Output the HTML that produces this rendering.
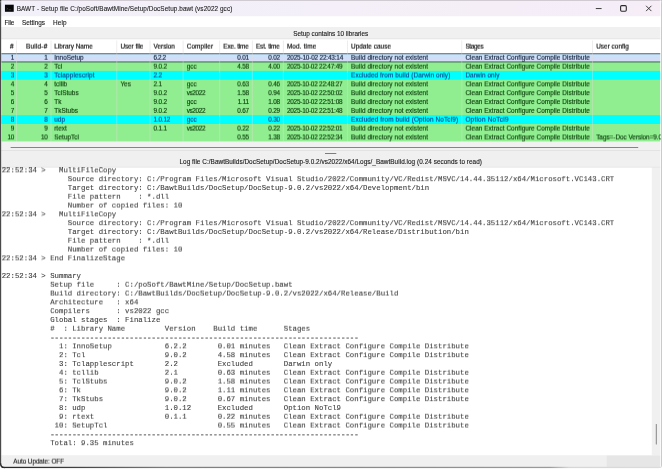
<!DOCTYPE html><html><head><meta charset="utf-8"><title>BAWT - Setup file</title><style>
html,body{margin:0;padding:0;background:#fff;}
body{width:662px;height:475px;overflow:hidden;position:relative;font-family:'Liberation Sans',sans-serif;}
.bg{position:absolute;left:0;top:0;}
.g{position:absolute;left:0;width:660.6px;overflow:hidden;height:10px;will-change:transform;white-space:pre;font-family:'Liberation Sans',sans-serif;font-size:6.4px;line-height:10px;color:#000;}
.g span{position:absolute;top:0;}
.m{position:absolute;left:1px;width:651px;overflow:hidden;will-change:transform;white-space:pre;font-family:'Liberation Mono',monospace;margin:0;-webkit-text-stroke:0.1px #3c3c3c;}

</style></head><body>
<svg class="bg" width="662" height="475" viewBox="0 0 662 475"><defs><clipPath id="win"><rect x="0" y="0" width="662.0" height="468.3" rx="3.5"/></clipPath><linearGradient id="tb" x1="0" x2="1" y1="0" y2="0"><stop offset="0" stop-color="#f2f0f8"/><stop offset="0.5" stop-color="#f4eff8"/><stop offset="1" stop-color="#f6edf7"/></linearGradient><linearGradient id="sel" x1="0" x2="0" y1="0" y2="1"><stop offset="0" stop-color="#c6e4fb"/><stop offset="0.45" stop-color="#cae2f9"/><stop offset="0.6" stop-color="#d3ddf6"/><stop offset="1" stop-color="#d5dcf6"/></linearGradient><linearGradient id="bb" x1="0" x2="1" y1="0" y2="0"><stop offset="0" stop-color="#242424"/><stop offset="0.1" stop-color="#3c3c3c"/><stop offset="0.25" stop-color="#7c7c7c"/><stop offset="0.65" stop-color="#8e8e8e"/><stop offset="0.83" stop-color="#9a9a9a"/><stop offset="0.86" stop-color="#d6d6d6"/><stop offset="1" stop-color="#dcdcdc"/></linearGradient></defs>
<rect x="657.00" y="0.00" width="5.00" height="5.00" fill="#c8c2ca" />
<g clip-path="url(#win)">
<rect x="0.00" y="0.00" width="662.00" height="468.30" fill="#f0f0f0" />
<rect x="0.00" y="0.00" width="662.00" height="16.20" fill="url(#tb)" />
<rect x="0.00" y="0.00" width="662.00" height="0.75" fill="#c4bec6" />
<rect x="0.00" y="16.20" width="662.00" height="10.80" fill="#ffffff" />
<rect x="1.00" y="38.60" width="660.00" height="0.80" fill="#dddddd" />
<rect x="1.00" y="39.30" width="660.00" height="111.30" fill="#ffffff" />
<rect x="16.10" y="40.50" width="0.80" height="12.40" fill="#e9e9e9" />
<rect x="50.60" y="40.50" width="0.80" height="12.40" fill="#e9e9e9" />
<rect x="116.40" y="40.50" width="0.80" height="12.40" fill="#e9e9e9" />
<rect x="149.60" y="40.50" width="0.80" height="12.40" fill="#e9e9e9" />
<rect x="182.70" y="40.50" width="0.80" height="12.40" fill="#e9e9e9" />
<rect x="219.30" y="40.50" width="0.80" height="12.40" fill="#e9e9e9" />
<rect x="251.90" y="40.50" width="0.80" height="12.40" fill="#e9e9e9" />
<rect x="282.90" y="40.50" width="0.80" height="12.40" fill="#e9e9e9" />
<rect x="347.00" y="40.50" width="0.80" height="12.40" fill="#e9e9e9" />
<rect x="461.40" y="40.50" width="0.80" height="12.40" fill="#e9e9e9" />
<rect x="592.20" y="40.50" width="0.80" height="12.40" fill="#e9e9e9" />
<rect x="1.50" y="53.20" width="659.10" height="88.50" fill="#90ee90" />
<rect x="1.50" y="53.20" width="659.10" height="8.85" fill="url(#sel)" />
<rect x="1.50" y="70.90" width="659.10" height="8.85" fill="#00ffff" />
<rect x="1.50" y="115.15" width="659.10" height="8.85" fill="#00ffff" />
<rect x="1.50" y="53.30" width="659.10" height="0.95" fill="#566676" />
<rect x="1.50" y="61.35" width="659.10" height="1.20" fill="#4a7f5c" />
<rect x="16.05" y="53.20" width="0.90" height="88.50" fill="#e6dcdc" opacity="0.45"/>
<rect x="50.55" y="53.20" width="0.90" height="88.50" fill="#e6dcdc" opacity="0.45"/>
<rect x="116.35" y="53.20" width="0.90" height="88.50" fill="#e6dcdc" opacity="0.45"/>
<rect x="149.55" y="53.20" width="0.90" height="88.50" fill="#e6dcdc" opacity="0.45"/>
<rect x="182.65" y="53.20" width="0.90" height="88.50" fill="#e6dcdc" opacity="0.45"/>
<rect x="219.25" y="53.20" width="0.90" height="88.50" fill="#e6dcdc" opacity="0.45"/>
<rect x="251.85" y="53.20" width="0.90" height="88.50" fill="#e6dcdc" opacity="0.45"/>
<rect x="282.85" y="53.20" width="0.90" height="88.50" fill="#e6dcdc" opacity="0.45"/>
<rect x="346.95" y="53.20" width="0.90" height="88.50" fill="#e6dcdc" opacity="0.45"/>
<rect x="461.35" y="53.20" width="0.90" height="88.50" fill="#e6dcdc" opacity="0.45"/>
<rect x="592.15" y="53.20" width="0.90" height="88.50" fill="#e6dcdc" opacity="0.45"/>
<rect x="1.00" y="141.70" width="660.00" height="8.80" fill="#f1f1f1" />
<rect x="10.50" y="146.90" width="627.80" height="1.10" fill="#858585" rx="0.5"/>
<rect x="1.00" y="150.20" width="660.00" height="0.70" fill="#dcdcdc" />
<rect x="325.00" y="153.10" width="11.30" height="0.90" fill="#707070" />
<rect x="1.40" y="166.80" width="659.30" height="0.90" fill="#e0e0e0" />
<rect x="1.40" y="167.60" width="650.60" height="287.60" fill="#ffffff" />
<rect x="651.80" y="167.60" width="8.40" height="287.60" fill="#f0f0f0" />
<rect x="655.80" y="424.00" width="1.00" height="20.50" fill="#858585" rx="0.5"/>
<rect x="606.70" y="455.60" width="54.00" height="11.40" fill="#e6e6e6" />
<rect x="0.00" y="0.00" width="1.15" height="468.30" fill="#4a4a4a" />
<rect x="660.20" y="0.00" width="0.90" height="468.30" fill="#ffffff" opacity="0.8"/>
<rect x="661.10" y="0.00" width="0.90" height="468.30" fill="#c8c4c8" />
<rect x="0.00" y="466.80" width="662.00" height="1.50" fill="url(#bb)" />
</g>
<path d="M0 0H2.2C1 0.4 0.4 1 0 2.2Z" fill="#222"/>
<path d="M0 464.3V468.3H4C1.5 468.3 0 466.8 0 464.3Z" fill="#fff"/>
<path d="M0.6 463.3C0.6 466.1 1.8 467.6 5 467.65000000000003" stroke="#2b2b2b" stroke-width="1.2" fill="none"/>
<rect x="4.95" y="4.70" width="8.80" height="7.10" fill="#070707" />
<path d="M6.6 7.9l1.2 0.8-1.2 0.8M8.6 9.7h2.6" stroke="#4a4a4a" stroke-width="0.6" fill="none"/>
<path d="M595.8 8.55h5.8" stroke="#2a2a2a" stroke-width="0.9" fill="none"/><rect x="620.6" y="5.6" width="5.7" height="5.6" rx="1.1" stroke="#2a2a2a" stroke-width="1.1" fill="none"/><path d="M646.1 5.8l5.3 5.3M651.4 5.8l-5.3 5.3" stroke="#2a2a2a" stroke-width="0.9" fill="none"/></svg>
<div class="g" style="top:3px;transform:translate3d(0,0.982px,0) rotateX(2deg);color:#222;-webkit-text-stroke:0.1px #222">
<span style="left:16.70px;letter-spacing:0.073px">BAWT - Setup file C:/poSoft/BawtMine/Setup/DocSetup.bawt (vs2022 gcc)</span>
</div>
<div class="g" style="top:17px;transform:translate3d(0,0.982px,0) rotateX(2deg);color:#1a1a1a;-webkit-text-stroke:0.12px #1a1a1a">
<span style="left:4.50px;letter-spacing:-0.178px">File</span>
<span style="left:22.10px;letter-spacing:-0.024px">Settings</span>
<span style="left:53.10px;letter-spacing:0.111px">Help</span>
</div>
<div class="g" style="top:28px;transform:translate3d(0,0.982px,0) rotateX(2deg);color:#1a1a1a;-webkit-text-stroke:0.12px #1a1a1a">
<span style="left:293.20px;letter-spacing:-0.012px">Setup contains 10 libraries</span>
</div>
<div class="g" style="top:41px;transform:translate3d(0,0.582px,0) rotateX(2deg);color:#111;-webkit-text-stroke:0.18px #111">
<span style="left:10.08px;letter-spacing:0.053px">#</span>
<span style="left:26.00px;letter-spacing:0.228px">Build-#</span>
<span style="left:54.20px;letter-spacing:0.020px">Library Name</span>
<span style="left:120.40px;letter-spacing:-0.050px">User file</span>
<span style="left:153.60px;letter-spacing:-0.018px">Version</span>
<span style="left:186.70px;letter-spacing:0.115px">Compiler</span>
<span style="left:223.30px;letter-spacing:-0.138px">Exe. time</span>
<span style="left:255.90px;letter-spacing:-0.107px">Est. time</span>
<span style="left:286.90px;letter-spacing:0.160px">Mod. time</span>
<span style="left:351.00px;letter-spacing:0.049px">Update cause</span>
<span style="left:465.40px;letter-spacing:-0.301px">Stages</span>
<span style="left:596.20px;letter-spacing:0.025px">User config</span>
</div>
<div class="g" style="top:52px;transform:translate3d(0,0.782px,0) rotateX(2deg);color:#14203c;-webkit-text-stroke:0.15px #14203c">
<span style="left:10.69px;letter-spacing:-0.249px">1</span>
<span style="left:44.29px;letter-spacing:-0.249px">1</span>
<span style="left:54.20px;letter-spacing:0.029px">InnoSetup</span>
<span style="left:153.60px;letter-spacing:-0.424px">6.2.2</span>
<span style="left:237.30px;letter-spacing:-0.213px">0.01</span>
<span style="left:268.32px;letter-spacing:-0.218px">0.02</span>
<span style="left:286.90px;letter-spacing:-0.165px">2025-10-02 22:43:14</span>
<span style="left:351.00px;letter-spacing:0.077px">Build directory not existent</span>
<span style="left:465.40px;letter-spacing:0.064px">Clean Extract Configure Compile Distribute</span>
</div>
<div class="g" style="top:61px;transform:translate3d(0,0.632px,0) rotateX(2deg);color:#0c3c0c;-webkit-text-stroke:0.15px #0c3c0c">
<span style="left:10.69px;letter-spacing:-0.249px">2</span>
<span style="left:44.29px;letter-spacing:-0.249px">2</span>
<span style="left:54.20px;letter-spacing:0.039px">Tcl</span>
<span style="left:153.60px;letter-spacing:-0.199px">9.0.2</span>
<span style="left:186.70px;letter-spacing:0.016px">gcc</span>
<span style="left:237.32px;letter-spacing:-0.218px">4.58</span>
<span style="left:268.32px;letter-spacing:-0.218px">4.00</span>
<span style="left:286.90px;letter-spacing:-0.205px">2025-10-02 22:47:49</span>
<span style="left:351.00px;letter-spacing:0.077px">Build directory not existent</span>
<span style="left:465.40px;letter-spacing:0.064px">Clean Extract Configure Compile Distribute</span>
</div>
<div class="g" style="top:70px;transform:translate3d(0,0.482px,0) rotateX(2deg);color:#00488c;-webkit-text-stroke:0.15px #00488c">
<span style="left:10.69px;letter-spacing:-0.249px">3</span>
<span style="left:44.29px;letter-spacing:-0.249px">3</span>
<span style="left:54.20px;letter-spacing:0.120px">Tclapplescript</span>
<span style="left:153.60px;letter-spacing:-0.207px">2.2</span>
<span style="left:351.00px;letter-spacing:0.117px">Excluded from build (Darwin only)</span>
<span style="left:465.40px;letter-spacing:0.055px">Darwin only</span>
</div>
<div class="g" style="top:79px;transform:translate3d(0,0.332px,0) rotateX(2deg);color:#0c3c0c;-webkit-text-stroke:0.15px #0c3c0c">
<span style="left:10.69px;letter-spacing:-0.249px">4</span>
<span style="left:44.29px;letter-spacing:-0.249px">4</span>
<span style="left:54.20px;letter-spacing:0.032px">tcllib</span>
<span style="left:120.40px;letter-spacing:0.052px">Yes</span>
<span style="left:153.60px;letter-spacing:-0.207px">2.1</span>
<span style="left:186.70px;letter-spacing:0.016px">gcc</span>
<span style="left:237.32px;letter-spacing:-0.218px">0.63</span>
<span style="left:268.32px;letter-spacing:-0.218px">0.46</span>
<span style="left:286.90px;letter-spacing:-0.205px">2025-10-02 22:48:27</span>
<span style="left:351.00px;letter-spacing:0.077px">Build directory not existent</span>
<span style="left:465.40px;letter-spacing:0.064px">Clean Extract Configure Compile Distribute</span>
</div>
<div class="g" style="top:88px;transform:translate3d(0,0.182px,0) rotateX(2deg);color:#0c3c0c;-webkit-text-stroke:0.15px #0c3c0c">
<span style="left:10.69px;letter-spacing:-0.249px">5</span>
<span style="left:44.29px;letter-spacing:-0.249px">5</span>
<span style="left:54.20px;letter-spacing:0.045px">TclStubs</span>
<span style="left:153.60px;letter-spacing:-0.199px">9.0.2</span>
<span style="left:186.70px;letter-spacing:-0.352px">vs2022</span>
<span style="left:237.32px;letter-spacing:-0.218px">1.58</span>
<span style="left:268.32px;letter-spacing:-0.218px">0.94</span>
<span style="left:286.90px;letter-spacing:-0.205px">2025-10-02 22:50:02</span>
<span style="left:351.00px;letter-spacing:0.077px">Build directory not existent</span>
<span style="left:465.40px;letter-spacing:0.064px">Clean Extract Configure Compile Distribute</span>
</div>
<div class="g" style="top:97px;transform:translate3d(0,0.032px,0) rotateX(2deg);color:#0c3c0c;-webkit-text-stroke:0.15px #0c3c0c">
<span style="left:10.69px;letter-spacing:-0.249px">6</span>
<span style="left:44.29px;letter-spacing:-0.249px">6</span>
<span style="left:54.20px;letter-spacing:0.053px">Tk</span>
<span style="left:153.60px;letter-spacing:-0.199px">9.0.2</span>
<span style="left:186.70px;letter-spacing:0.016px">gcc</span>
<span style="left:237.77px;letter-spacing:-0.209px">1.11</span>
<span style="left:268.32px;letter-spacing:-0.218px">1.08</span>
<span style="left:286.90px;letter-spacing:-0.205px">2025-10-02 22:51:08</span>
<span style="left:351.00px;letter-spacing:0.077px">Build directory not existent</span>
<span style="left:465.40px;letter-spacing:0.064px">Clean Extract Configure Compile Distribute</span>
</div>
<div class="g" style="top:105px;transform:translate3d(0,0.882px,0) rotateX(2deg);color:#0c3c0c;-webkit-text-stroke:0.15px #0c3c0c">
<span style="left:10.69px;letter-spacing:-0.249px">7</span>
<span style="left:44.29px;letter-spacing:-0.249px">7</span>
<span style="left:54.20px;letter-spacing:0.050px">TkStubs</span>
<span style="left:153.60px;letter-spacing:-0.199px">9.0.2</span>
<span style="left:186.70px;letter-spacing:-0.352px">vs2022</span>
<span style="left:237.32px;letter-spacing:-0.218px">0.67</span>
<span style="left:268.32px;letter-spacing:-0.218px">0.29</span>
<span style="left:286.90px;letter-spacing:-0.205px">2025-10-02 22:51:48</span>
<span style="left:351.00px;letter-spacing:0.077px">Build directory not existent</span>
<span style="left:465.40px;letter-spacing:0.064px">Clean Extract Configure Compile Distribute</span>
</div>
<div class="g" style="top:114px;transform:translate3d(0,0.732px,0) rotateX(2deg);color:#00488c;-webkit-text-stroke:0.15px #00488c">
<span style="left:10.69px;letter-spacing:-0.249px">8</span>
<span style="left:44.29px;letter-spacing:-0.249px">8</span>
<span style="left:54.20px;letter-spacing:0.053px">udp</span>
<span style="left:153.60px;letter-spacing:-0.207px">1.0.12</span>
<span style="left:186.70px;letter-spacing:0.016px">gcc</span>
<span style="left:268.32px;letter-spacing:-0.218px">0.30</span>
<span style="left:351.00px;letter-spacing:0.140px">Excluded from build (Option NoTcl9)</span>
<span style="left:465.40px;letter-spacing:0.243px">Option NoTcl9</span>
</div>
<div class="g" style="top:123px;transform:translate3d(0,0.582px,0) rotateX(2deg);color:#0c3c0c;-webkit-text-stroke:0.15px #0c3c0c">
<span style="left:10.69px;letter-spacing:-0.249px">9</span>
<span style="left:44.29px;letter-spacing:-0.249px">9</span>
<span style="left:54.20px;letter-spacing:0.037px">rtext</span>
<span style="left:153.60px;letter-spacing:-0.199px">0.1.1</span>
<span style="left:186.70px;letter-spacing:-0.352px">vs2022</span>
<span style="left:237.32px;letter-spacing:-0.218px">0.22</span>
<span style="left:268.32px;letter-spacing:-0.218px">0.22</span>
<span style="left:286.90px;letter-spacing:-0.205px">2025-10-02 22:52:01</span>
<span style="left:351.00px;letter-spacing:0.077px">Build directory not existent</span>
<span style="left:465.40px;letter-spacing:0.064px">Clean Extract Configure Compile Distribute</span>
</div>
<div class="g" style="top:132px;transform:translate3d(0,0.432px,0) rotateX(2deg);color:#0c3c0c;-webkit-text-stroke:0.15px #0c3c0c">
<span style="left:7.39px;letter-spacing:-0.249px">10</span>
<span style="left:40.99px;letter-spacing:-0.249px">10</span>
<span style="left:54.20px;letter-spacing:0.046px">SetupTcl</span>
<span style="left:237.32px;letter-spacing:-0.218px">0.55</span>
<span style="left:268.32px;letter-spacing:-0.218px">1.38</span>
<span style="left:286.90px;letter-spacing:-0.205px">2025-10-02 22:52:34</span>
<span style="left:351.00px;letter-spacing:0.077px">Build directory not existent</span>
<span style="left:465.40px;letter-spacing:0.064px">Clean Extract Configure Compile Distribute</span>
<span style="left:596.20px;letter-spacing:-0.022px">Tags=-Doc Version=9.0.2</span>
</div>
<div class="g" style="top:156px;transform:translate3d(0,0.982px,0) rotateX(2deg);color:#1a1a1a;-webkit-text-stroke:0.12px #1a1a1a">
<span style="left:179.50px;letter-spacing:0.044px">Log file C:/BawtBuilds/DocSetup/DocSetup-9.0.2/vs2022/x64/Logs/_BawtBuild.log (0.24 seconds to read)</span>
</div>
<div class="g" style="top:456px;transform:translate3d(0,0.582px,0) rotateX(2deg);color:#1a1a1a;-webkit-text-stroke:0.12px #1a1a1a">
<span style="left:13.30px;letter-spacing:-0.072px">Auto Update: OFF</span>
</div>
<pre class="m" style="top:165px;height:10.0px;line-height:10.0px;font-size:7.355px;color:#3c3c3c;padding-left:0.70px;box-sizing:border-box;clip-path:inset(2.60px 0 0 0);transform:translate3d(0,0.339px,0) rotateX(2deg);">22:52:34 &gt;   MultiFileCopy</pre>
<pre class="m" style="top:174px;height:10.0px;line-height:10.0px;font-size:7.355px;color:#3c3c3c;padding-left:0.70px;box-sizing:border-box;transform:translate3d(0,0.139px,0) rotateX(2deg);">               Source directory: C:/Program Files/Microsoft Visual Studio/2022/Community/VC/Redist/MSVC/14.44.35112/x64/Microsoft.VC143.CRT</pre>
<pre class="m" style="top:182px;height:10.0px;line-height:10.0px;font-size:7.355px;color:#3c3c3c;padding-left:0.70px;box-sizing:border-box;transform:translate3d(0,0.939px,0) rotateX(2deg);">               Target directory: C:/BawtBuilds/DocSetup/DocSetup-9.0.2/vs2022/x64/Development/bin</pre>
<pre class="m" style="top:191px;height:10.0px;line-height:10.0px;font-size:7.355px;color:#3c3c3c;padding-left:0.70px;box-sizing:border-box;transform:translate3d(0,0.739px,0) rotateX(2deg);">               File pattern    : *.dll</pre>
<pre class="m" style="top:200px;height:10.0px;line-height:10.0px;font-size:7.355px;color:#3c3c3c;padding-left:0.70px;box-sizing:border-box;transform:translate3d(0,0.539px,0) rotateX(2deg);">               Number of copied files: 10</pre>
<pre class="m" style="top:209px;height:10.0px;line-height:10.0px;font-size:7.355px;color:#3c3c3c;padding-left:0.70px;box-sizing:border-box;transform:translate3d(0,0.339px,0) rotateX(2deg);">22:52:34 &gt;   MultiFileCopy</pre>
<pre class="m" style="top:218px;height:10.0px;line-height:10.0px;font-size:7.355px;color:#3c3c3c;padding-left:0.70px;box-sizing:border-box;transform:translate3d(0,0.139px,0) rotateX(2deg);">               Source directory: C:/Program Files/Microsoft Visual Studio/2022/Community/VC/Redist/MSVC/14.44.35112/x64/Microsoft.VC143.CRT</pre>
<pre class="m" style="top:226px;height:10.0px;line-height:10.0px;font-size:7.355px;color:#3c3c3c;padding-left:0.70px;box-sizing:border-box;transform:translate3d(0,0.939px,0) rotateX(2deg);">               Target directory: C:/BawtBuilds/DocSetup/DocSetup-9.0.2/vs2022/x64/Release/Distribution/bin</pre>
<pre class="m" style="top:235px;height:10.0px;line-height:10.0px;font-size:7.355px;color:#3c3c3c;padding-left:0.70px;box-sizing:border-box;transform:translate3d(0,0.739px,0) rotateX(2deg);">               File pattern    : *.dll</pre>
<pre class="m" style="top:244px;height:10.0px;line-height:10.0px;font-size:7.355px;color:#3c3c3c;padding-left:0.70px;box-sizing:border-box;transform:translate3d(0,0.539px,0) rotateX(2deg);">               Number of copied files: 10</pre>
<pre class="m" style="top:253px;height:10.0px;line-height:10.0px;font-size:7.355px;color:#3c3c3c;padding-left:0.70px;box-sizing:border-box;transform:translate3d(0,0.339px,0) rotateX(2deg);">22:52:34 &gt; End FinalizeStage</pre>
<pre class="m" style="top:270px;height:10.0px;line-height:10.0px;font-size:7.355px;color:#3c3c3c;padding-left:0.70px;box-sizing:border-box;transform:translate3d(0,0.939px,0) rotateX(2deg);">22:52:34 &gt; Summary</pre>
<pre class="m" style="top:279px;height:10.0px;line-height:10.0px;font-size:7.355px;color:#3c3c3c;padding-left:0.70px;box-sizing:border-box;transform:translate3d(0,0.739px,0) rotateX(2deg);">           Setup file     : C:/poSoft/BawtMine/Setup/DocSetup.bawt</pre>
<pre class="m" style="top:288px;height:10.0px;line-height:10.0px;font-size:7.355px;color:#3c3c3c;padding-left:0.70px;box-sizing:border-box;transform:translate3d(0,0.539px,0) rotateX(2deg);">           Build directory: C:/BawtBuilds/DocSetup/DocSetup-9.0.2/vs2022/x64/Release/Build</pre>
<pre class="m" style="top:297px;height:10.0px;line-height:10.0px;font-size:7.355px;color:#3c3c3c;padding-left:0.70px;box-sizing:border-box;transform:translate3d(0,0.339px,0) rotateX(2deg);">           Architecture   : x64</pre>
<pre class="m" style="top:306px;height:10.0px;line-height:10.0px;font-size:7.355px;color:#3c3c3c;padding-left:0.70px;box-sizing:border-box;transform:translate3d(0,0.139px,0) rotateX(2deg);">           Compilers      : vs2022 gcc</pre>
<pre class="m" style="top:314px;height:10.0px;line-height:10.0px;font-size:7.355px;color:#3c3c3c;padding-left:0.70px;box-sizing:border-box;transform:translate3d(0,0.939px,0) rotateX(2deg);">           Global stages  : Finalize</pre>
<pre class="m" style="top:323px;height:10.0px;line-height:10.0px;font-size:7.355px;color:#3c3c3c;padding-left:0.70px;box-sizing:border-box;transform:translate3d(0,0.739px,0) rotateX(2deg);">           #  : Library Name         Version    Build time      Stages</pre>
<pre class="m" style="top:332px;height:10.0px;line-height:10.0px;font-size:7.355px;color:#2e2e2e;-webkit-text-stroke:0.22px #2e2e2e;padding-left:0.70px;box-sizing:border-box;transform:translate3d(0,0.539px,0) rotateX(2deg);">           ----------------------------------------------------------------------</pre>
<pre class="m" style="top:341px;height:10.0px;line-height:10.0px;font-size:7.355px;color:#3c3c3c;padding-left:0.70px;box-sizing:border-box;transform:translate3d(0,0.339px,0) rotateX(2deg);">             1: InnoSetup            6.2.2       0.01 minutes   Clean Extract Configure Compile Distribute</pre>
<pre class="m" style="top:350px;height:10.0px;line-height:10.0px;font-size:7.355px;color:#3c3c3c;padding-left:0.70px;box-sizing:border-box;transform:translate3d(0,0.139px,0) rotateX(2deg);">             2: Tcl                  9.0.2       4.58 minutes   Clean Extract Configure Compile Distribute</pre>
<pre class="m" style="top:358px;height:10.0px;line-height:10.0px;font-size:7.355px;color:#3c3c3c;padding-left:0.70px;box-sizing:border-box;transform:translate3d(0,0.939px,0) rotateX(2deg);">             3: Tclapplescript       2.2         Excluded       Darwin only</pre>
<pre class="m" style="top:367px;height:10.0px;line-height:10.0px;font-size:7.355px;color:#3c3c3c;padding-left:0.70px;box-sizing:border-box;transform:translate3d(0,0.739px,0) rotateX(2deg);">             4: tcllib               2.1         0.63 minutes   Clean Extract Configure Compile Distribute</pre>
<pre class="m" style="top:376px;height:10.0px;line-height:10.0px;font-size:7.355px;color:#3c3c3c;padding-left:0.70px;box-sizing:border-box;transform:translate3d(0,0.539px,0) rotateX(2deg);">             5: TclStubs             9.0.2       1.58 minutes   Clean Extract Configure Compile Distribute</pre>
<pre class="m" style="top:385px;height:10.0px;line-height:10.0px;font-size:7.355px;color:#3c3c3c;padding-left:0.70px;box-sizing:border-box;transform:translate3d(0,0.339px,0) rotateX(2deg);">             6: Tk                   9.0.2       1.11 minutes   Clean Extract Configure Compile Distribute</pre>
<pre class="m" style="top:394px;height:10.0px;line-height:10.0px;font-size:7.355px;color:#3c3c3c;padding-left:0.70px;box-sizing:border-box;transform:translate3d(0,0.139px,0) rotateX(2deg);">             7: TkStubs              9.0.2       0.67 minutes   Clean Extract Configure Compile Distribute</pre>
<pre class="m" style="top:402px;height:10.0px;line-height:10.0px;font-size:7.355px;color:#3c3c3c;padding-left:0.70px;box-sizing:border-box;transform:translate3d(0,0.939px,0) rotateX(2deg);">             8: udp                  1.0.12      Excluded       Option NoTcl9</pre>
<pre class="m" style="top:411px;height:10.0px;line-height:10.0px;font-size:7.355px;color:#3c3c3c;padding-left:0.70px;box-sizing:border-box;transform:translate3d(0,0.739px,0) rotateX(2deg);">             9: rtext                0.1.1       0.22 minutes   Clean Extract Configure Compile Distribute</pre>
<pre class="m" style="top:420px;height:10.0px;line-height:10.0px;font-size:7.355px;color:#3c3c3c;padding-left:0.70px;box-sizing:border-box;transform:translate3d(0,0.539px,0) rotateX(2deg);">            10: SetupTcl                         0.55 minutes   Clean Extract Configure Compile Distribute</pre>
<pre class="m" style="top:429px;height:10.0px;line-height:10.0px;font-size:7.355px;color:#2e2e2e;-webkit-text-stroke:0.22px #2e2e2e;padding-left:0.70px;box-sizing:border-box;transform:translate3d(0,0.339px,0) rotateX(2deg);">           ----------------------------------------------------------------------</pre>
<pre class="m" style="top:438px;height:10.0px;line-height:10.0px;font-size:7.355px;color:#3c3c3c;padding-left:0.70px;box-sizing:border-box;transform:translate3d(0,0.139px,0) rotateX(2deg);">           Total: 9.35 minutes</pre>
</body></html>
